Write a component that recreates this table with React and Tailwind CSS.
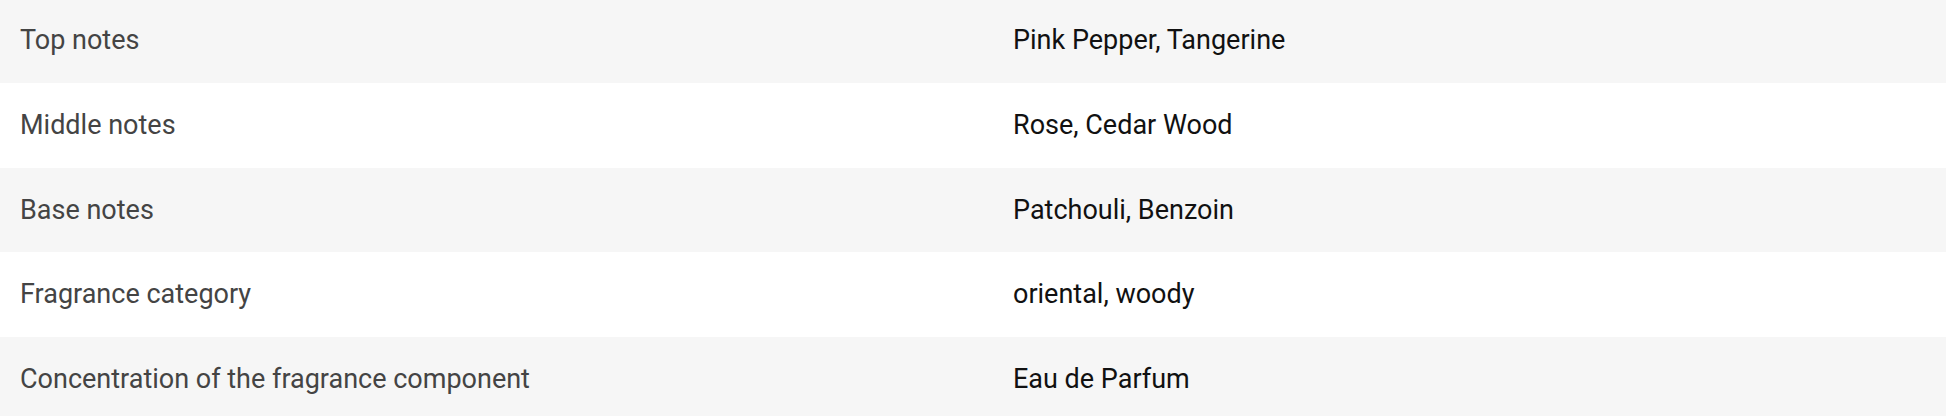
import React from 'react';

const rows = [
  { label: 'Top notes', value: 'Pink Pepper, Tangerine' },
  { label: 'Middle notes', value: 'Rose, Cedar Wood' },
  { label: 'Base notes', value: 'Patchouli, Benzoin' },
  { label: 'Fragrance category', value: 'oriental, woody' },
  { label: 'Concentration of the fragrance component', value: 'Eau de Parfum' },
];

const App = () => {
  return (
    <div className="w-full bg-white font-['Roboto',sans-serif] text-[27px] overflow-hidden h-[416px]">
      <div className="-mt-[1.7px]">
        {rows.map((row, i) => (
          <div
            key={row.label}
            className={`grid grid-cols-2 h-[84.7px] items-center ${i % 2 === 0 ? 'bg-[#f6f6f6]' : 'bg-white'}`}
          >
            <div className="pl-5 text-[#444444]">{row.label}</div>
            <div className="pl-[40px] text-[#111111]">{row.value}</div>
          </div>
        ))}
      </div>
    </div>
  );
};

export default App;
